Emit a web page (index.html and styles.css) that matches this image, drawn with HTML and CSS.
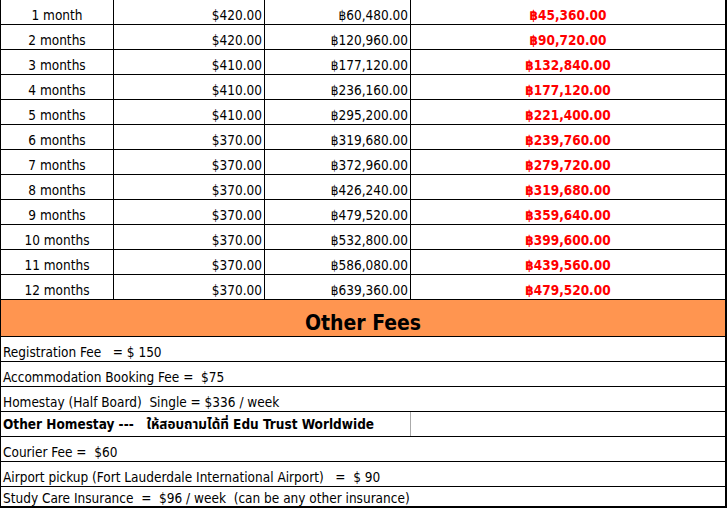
FILE: index.html
```html
<!DOCTYPE html>
<html>
<head>
<meta charset="utf-8">
<link rel="stylesheet" href="styles.css">
</head>
<body>
<div class="sheet">
  <div class="row first"><div class="c c1">1 month</div><div class="c c2">$420.00</div><div class="c c3">฿60,480.00</div><div class="c c4">฿45,360.00</div></div>
  <div class="row"><div class="c c1">2 months</div><div class="c c2">$420.00</div><div class="c c3">฿120,960.00</div><div class="c c4">฿90,720.00</div></div>
  <div class="row"><div class="c c1">3 months</div><div class="c c2">$410.00</div><div class="c c3">฿177,120.00</div><div class="c c4">฿132,840.00</div></div>
  <div class="row"><div class="c c1">4 months</div><div class="c c2">$410.00</div><div class="c c3">฿236,160.00</div><div class="c c4">฿177,120.00</div></div>
  <div class="row"><div class="c c1">5 months</div><div class="c c2">$410.00</div><div class="c c3">฿295,200.00</div><div class="c c4">฿221,400.00</div></div>
  <div class="row"><div class="c c1">6 months</div><div class="c c2">$370.00</div><div class="c c3">฿319,680.00</div><div class="c c4">฿239,760.00</div></div>
  <div class="row"><div class="c c1">7 months</div><div class="c c2">$370.00</div><div class="c c3">฿372,960.00</div><div class="c c4">฿279,720.00</div></div>
  <div class="row"><div class="c c1">8 months</div><div class="c c2">$370.00</div><div class="c c3">฿426,240.00</div><div class="c c4">฿319,680.00</div></div>
  <div class="row"><div class="c c1">9 months</div><div class="c c2">$370.00</div><div class="c c3">฿479,520.00</div><div class="c c4">฿359,640.00</div></div>
  <div class="row"><div class="c c1">10 months</div><div class="c c2">$370.00</div><div class="c c3">฿532,800.00</div><div class="c c4">฿399,600.00</div></div>
  <div class="row"><div class="c c1">11 months</div><div class="c c2">$370.00</div><div class="c c3">฿586,080.00</div><div class="c c4">฿439,560.00</div></div>
  <div class="row"><div class="c c1">12 months</div><div class="c c2">$370.00</div><div class="c c3">฿639,360.00</div><div class="c c4">฿479,520.00</div></div>
  <div class="band">Other Fees</div>
  <div class="line">Registration Fee &nbsp; = $ 150</div>
  <div class="line">Accommodation Booking Fee = &nbsp;$75</div>
  <div class="line">Homestay (Half Board) &nbsp;Single = $336 / week</div>
  <div class="line split"><div class="sl bold">Other Homestay --- &nbsp; ให้สอบถามได้ที่ Edu Trust Worldwide</div><div class="sr"></div></div>
  <div class="line">Courier Fee = &nbsp;$60</div>
  <div class="line">Airport pickup (Fort Lauderdale International Airport) &nbsp; = &nbsp;$ 90</div>
  <div class="line last">Study Care Insurance &nbsp;= &nbsp;$96 / week &nbsp;(can be any other insurance)</div>
  <div class="tail"><div class="t1"></div><div class="t2"></div><div class="t3"></div></div>
</div>
</body>
</html>
```
FILE: styles.css
```css
html, body {
  margin: 0;
  padding: 0;
  background: #fff;
}
.sheet {
  width: 727px;
  box-sizing: border-box;
  border-left: 1px solid #000;
  border-right: 2px solid #000;
  font-family: "DejaVu Sans Condensed", "DejaVu Sans", "Noto Sans Thai", "Noto Sans", sans-serif;
  font-size: 13.5px;
  color: #000;
}
.row {
  display: grid;
  grid-template-columns: 113px 151px 146px 1fr;
  height: 25px;
  box-sizing: border-box;
  border-bottom: 1px solid #000;
}
.c {
  display: flex;
  align-items: flex-end;
  padding-bottom: 1px;
  box-sizing: border-box;
  border-right: 1px solid #000;
  white-space: nowrap;
}
.c1 { justify-content: center; }
.c2, .c3 { justify-content: flex-end; padding-right: 2px; }
.c4 {
  justify-content: center;
  border-right: none;
  color: #ff0000;
  font-weight: bold;
}
.band {
  height: 37px;
  box-sizing: border-box;
  border-bottom: 1px solid #000;
  background: #ff9550;
  display: flex;
  align-items: flex-end;
  justify-content: center;
  padding-bottom: 1px;
  font-weight: bold;
  font-size: 21px;
}
.line {
  height: 25px;
  box-sizing: border-box;
  border-bottom: 1px solid #000;
  display: flex;
  align-items: flex-end;
  padding: 0 0 1px 2px;
  white-space: nowrap;
}
.line.split {
  padding: 0;
  align-items: stretch;
}
.sl {
  width: 410px;
  box-sizing: border-box;
  border-right: 1px solid #aaa;
  display: flex;
  align-items: flex-end;
  padding: 0 0 1px 2px;
}
.bold { font-weight: bold; }
.line.last {
  height: 21px;
  border-bottom: 2px solid #000;
  padding-bottom: 0;
}
.tail {
  display: grid;
  grid-template-columns: 113px 151px 146px 1fr;
  height: 1px;
}
.tail div { border-right: 1px solid #888; }
```
